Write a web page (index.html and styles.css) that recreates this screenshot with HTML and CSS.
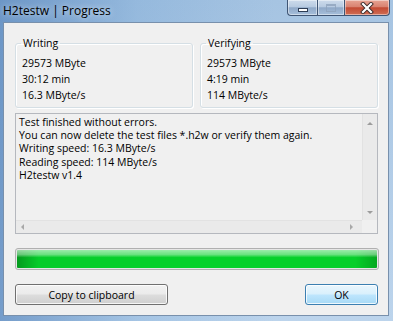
FILE: index.html
```html
<!DOCTYPE html>
<html lang="en">
<head>
<meta charset="utf-8">
<title>H2testw | Progress</title>
<link rel="stylesheet" href="styles.css">
</head>
<body>
<div class="window">
  <div class="titlebar">
    <span class="title">H2testw | Progress</span>
    <div class="caption">
      <span class="cb min"><span class="min-glyph"></span></span>
      <span class="cb max"><span class="max-glyph"></span></span>
      <span class="cb close">
        <svg width="14" height="12" viewBox="0 0 14 12"><path d="M3 2 L11 10 M11 2 L3 10" stroke="#3b2a2a" stroke-width="4" stroke-linecap="square"/><path d="M3 2 L11 10 M11 2 L3 10" stroke="#ffffff" stroke-width="2.2" stroke-linecap="square"/></svg>
      </span>
    </div>
  </div>
  <div class="client">
    <div class="groups">
      <fieldset class="group">
        <legend>Writing</legend>
        <div>29573 MByte</div>
        <div>30:12 min</div>
        <div>16.3 MByte/s</div>
      </fieldset>
      <fieldset class="group">
        <legend>Verifying</legend>
        <div>29573 MByte</div>
        <div>4:19 min</div>
        <div>114 MByte/s</div>
      </fieldset>
    </div>
    <div class="log">
      <div class="log-main">
        <div class="log-text">
          <div>Test finished without errors.</div>
          <div>You can now delete the test files *.h2w or verify them again.</div>
          <div>Writing speed: 16.3 MByte/s</div>
          <div>Reading speed: 114 MByte/s</div>
          <div>H2testw v1.4</div>
        </div>
        <div class="vscroll">
          <span class="arrow up"></span>
          <span class="arrow down"></span>
        </div>
      </div>
      <div class="hrow">
        <div class="hscroll">
          <span class="arrow left"></span>
          <span class="arrow right"></span>
        </div>
        <div class="corner"></div>
      </div>
    </div>
    <div class="progress"><div class="fill"></div></div>
    <div class="buttons">
      <button class="btn copy">Copy to clipboard</button>
      <button class="btn ok">OK</button>
    </div>
  </div>
</div>
</body>
</html>
```
FILE: styles.css
```css
* { box-sizing: border-box; }
html, body { margin: 0; padding: 0; }
body {
  width: 393px;
  height: 321px;
  overflow: hidden;
  font-family: "Open Sans", "Noto Sans", sans-serif;
  font-size: 10.5px;
  color: #000;
}
.window {
  width: 393px;
  height: 321px;
  display: flex;
  flex-direction: column;
  background:
    linear-gradient(to right, rgba(70,120,180,0.6) 0, rgba(110,160,210,0.3) 35%, rgba(200,220,240,0) 70%),
    linear-gradient(#a6c4e2, #bcd4ec);
}
.titlebar {
  height: 22px;
  display: flex;
  justify-content: space-between;
  align-items: flex-start;
}
.title {
  font-size: 12px;
  line-height: 14px;
  padding: 4px 0 0 3px;
  color: #000;
  text-shadow: 0 0 6px rgba(255,255,255,0.8);
}
.caption {
  display: flex;
  margin-right: 3px;
}
.cb {
  height: 16px;
  display: flex;
  align-items: center;
  justify-content: center;
  border: 1px solid #3f5574;
  border-top: none;
  box-shadow: inset 0 0 0 1px rgba(255,255,255,0.45);
}
.min {
  width: 30px;
  border-right: none;
  border-radius: 0 0 0 4px;
  background: linear-gradient(#cddbeb 0, #b8cbe1 45%, #90a9c8 52%, #a6bfdb 100%);
}
.max {
  width: 27px;
  border-right: none;
  background: linear-gradient(#cddbeb 0, #b8cbe1 45%, #90a9c8 52%, #a6bfdb 100%);
}
.close {
  width: 46px;
  border-radius: 0 0 4px 0;
  background: linear-gradient(#e7a494 0, #d98270 45%, #c34a33 52%, #cf6e55 100%);
}
.min-glyph {
  width: 10px;
  height: 4px;
  margin-top: 5px;
  background: #fff;
  border: 1px solid #2d3d55;
}
.max-glyph {
  width: 10px;
  height: 8px;
  border: 1px solid #8ea2bb;
  border-top-width: 2px;
  background: transparent;
  opacity: 0.8;
}
.client {
  flex: 1;
  margin: 0 4px 5px 3px;
  border: 1px solid #7890ac;
  background: #f0f0f0;
  padding: 12px 10px 10px 11px;
  display: flex;
  flex-direction: column;
}
.groups {
  display: grid;
  grid-template-columns: 1fr 1fr;
  column-gap: 7px;
}
.group {
  margin: 0;
  min-width: 0;
  border: 1px solid #d5dfe5;
  border-radius: 3px;
  box-shadow: inset 1px 1px 0 #fff, 1px 1px 0 #fff;
  padding: 4px 6px 4px 6px;
  line-height: 16px;
}
.group legend {
  padding: 0 2px;
  margin-left: -1px;
  line-height: 16px;
}
.log {
  margin-top: 5px;
  height: 121px;
  border: 1px solid #b5b8be;
  display: flex;
  flex-direction: column;
}
.log-main {
  flex: 1;
  display: flex;
}
.log-text {
  flex: 1;
  padding: 2px 0 0 3px;
  line-height: 13.2px;
  white-space: nowrap;
  overflow: hidden;
}
.vscroll {
  width: 15px;
  background: #eaeaea;
  border-left: 1px solid #e2e2e2;
  display: flex;
  flex-direction: column;
  justify-content: space-between;
  align-items: center;
  padding: 8px 0 6px;
}
.hrow {
  height: 13px;
  display: flex;
}
.hscroll {
  flex: 1;
  background: #eaeaea;
  border-top: 1px solid #e2e2e2;
  display: flex;
  justify-content: space-between;
  align-items: center;
  padding: 0 9px 0 5px;
}
.corner {
  width: 15px;
  background: #f0f0f0;
}
.arrow {
  width: 0;
  height: 0;
  border: 3px solid transparent;
}
.arrow.up { border-bottom: 3px solid #9c9c9c; border-top: none; }
.arrow.down { border-top: 3px solid #9c9c9c; border-bottom: none; }
.arrow.left { border-right: 3px solid #a8a8a8; border-left: none; }
.arrow.right { border-left: 3px solid #a8a8a8; border-right: none; }
.progress {
  margin-top: 14px;
  margin-right: -1px;
  height: 22px;
  border: 1px solid #b0b0b0;
  border-radius: 3px;
  padding: 1px;
  background: #e6e6e6;
}
.fill {
  height: 100%;
  border-radius: 1px;
  background:
    linear-gradient(rgba(255,255,255,0.6) 0, rgba(255,255,255,0.4) 25%, rgba(255,255,255,0) 42%),
    linear-gradient(to right, #049a1e 0, #06cc2a 6%, #06d22b 50%, #06cf2a 94%, #04a81f 100%);
}
.buttons {
  margin-top: 14px;
  display: flex;
  justify-content: space-between;
}
.btn {
  height: 21px;
  font: inherit;
  color: #000;
  padding: 0;
  border-radius: 3px;
  box-shadow: inset 0 0 0 1px rgba(255,255,255,0.8);
}
.copy {
  width: 153px;
  border: 1px solid #707070;
  background: linear-gradient(#f2f2f2 0, #ebebeb 48%, #dddddd 52%, #cfcfcf 100%);
}
.ok {
  width: 73px;
  border: 1px solid #3c7fb1;
  background: linear-gradient(#eaf6fd 0, #d9f0fc 48%, #bee6fd 52%, #a7d9f5 100%);
}
```
